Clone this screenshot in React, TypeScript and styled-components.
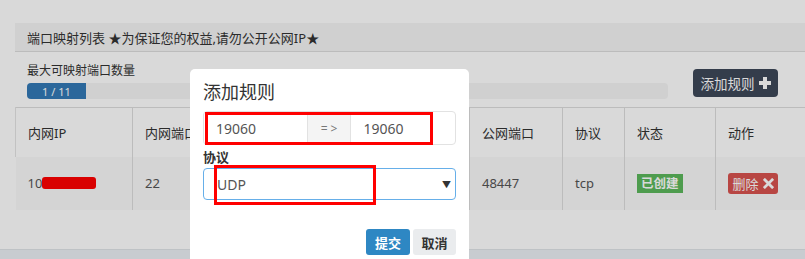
import React from "react";
import styled, { createGlobalStyle } from "styled-components";

const Global = createGlobalStyle`
  html, body { margin: 0; padding: 0; }
  body {
    width: 805px; height: 259px; overflow: hidden; background: #ffffff;
    font-family: "Noto Sans", "Noto Sans CJK SC", sans-serif; color: #333;
  }
  #root { position: relative; width: 805px; height: 259px; }
`;

const Page = styled.div`
  position: relative;
  width: 805px;
  height: 259px;
  overflow: hidden;
  display: flex;
  flex-direction: column;
`;

const Content = styled.div`
  padding: 23px 0 0 15px;
`;

const Panel = styled.div`
  width: 820px;
  background: #fff;
  display: flex;
  flex-direction: column;
`;

const Heading = styled.div`
  height: 29px;
  box-sizing: border-box;
  background: #f5f5f5;
  border-bottom: 1px solid #ddd;
  padding-left: 12px;
  display: flex;
  align-items: center;
  font-size: 13px;
  color: #333;
`;

const TopSection = styled.div`
  display: flex;
  align-items: flex-end;
  padding: 10px 12px 8px;
`;

const QuotaBlock = styled.div`
  width: 641px;
  display: flex;
  flex-direction: column;
  gap: 3px;
`;

const QuotaLabel = styled.div`
  font-size: 12px;
  line-height: 18px;
  color: #333;
`;

const Progress = styled.div`
  height: 16px;
  background: #f5f5f5;
  border-radius: 4px;
  overflow: hidden;
  display: flex;
`;

const ProgressFill = styled.div`
  background: #337ab7;
  color: #fff;
  font-size: 11px;
  display: flex;
  align-items: center;
  justify-content: center;
`;

const AddButton = styled.button`
  margin-left: 25px;
  margin-bottom: 2px;
  width: 85px;
  height: 28px;
  border: none;
  border-radius: 4px;
  background: #3e4859;
  color: #fff;
  font-family: inherit;
  font-size: 13.5px;
  display: flex;
  align-items: center;
  justify-content: center;
  gap: 4px;
  padding: 0;
`;

const Table = styled.table`
  border-collapse: collapse;
  table-layout: fixed;
  width: 805px;
  border-top: 1px solid #ddd;
  font-size: 13px;
`;

const Th = styled.th<{ $w: number; $first?: boolean }>`
  width: ${(p) => p.$w}px;
  height: 49px;
  padding: 0 12px;
  text-align: left;
  font-weight: normal;
  color: #333;
  border-left: 1px solid ${(p) => (p.$first ? "#e4e4e4" : "#ddd")};
  box-sizing: border-box;
`;

const Td = styled.td<{ $first?: boolean }>`
  height: 53px;
  padding: 0 12px;
  background: #f9f9f9;
  color: #555;
  border-left: ${(p) => (p.$first ? "none" : "1px solid #ddd")};
`;

const Redact = styled.span`
  display: inline-block;
  width: 54px;
  height: 12px;
  margin-left: -4px;
  background: #ff0000;
  border-radius: 3px;
  vertical-align: -1px;
`;

const StatusLabel = styled.span`
  display: inline-block;
  background: #5cb85c;
  color: #fff;
  font-size: 12.5px;
  font-weight: bold;
  line-height: 19px;
  padding: 0 4px;
`;

const DeleteButton = styled.button`
  border: none;
  border-radius: 3px;
  background: #d9534f;
  color: #fff;
  font-family: inherit;
  font-size: 13px;
  height: 21px;
  width: 50px;
  padding: 0;
  display: inline-flex;
  align-items: center;
  justify-content: center;
  gap: 4px;
`;

const Spacer = styled.div`
  height: 39px;
  background: #fff;
`;

const Footer = styled.div`
  flex: 1;
  background: #ecf0f5;
  border-top: 1px solid #e0e4e8;
`;

const Overlay = styled.div`
  position: absolute;
  inset: 0;
  background: rgba(0, 0, 0, 0.15);
`;

const Modal = styled.div`
  position: absolute;
  left: 190px;
  top: 69px;
  width: 279px;
  height: 210px;
  background: #fff;
  border-radius: 5px;
  box-sizing: border-box;
  padding: 10px 13px 0;
  display: flex;
  flex-direction: column;
`;

const ModalTitle = styled.div`
  font-size: 18px;
  line-height: 26px;
  color: #333;
  margin-bottom: 6px;
`;

const InputGroup = styled.div`
  display: flex;
  height: 34px;
  border: 1px solid #e2e2e2;
  border-radius: 4px;
  box-sizing: border-box;
  overflow: hidden;
`;

const Field = styled.div<{ $w: number }>`
  width: ${(p) => p.$w}px;
  display: flex;
  align-items: center;
  padding-left: 12px;
  box-sizing: border-box;
  font-size: 14px;
  color: #555;
`;

const Addon = styled.div`
  width: 45px;
  background: #f4f4f4;
  border-left: 1px solid #e2e2e2;
  border-right: 1px solid #e2e2e2;
  display: flex;
  align-items: center;
  justify-content: center;
  font-size: 12px;
  color: #777;
  letter-spacing: 3px;
  padding-left: 3px;
  box-sizing: border-box;
`;

const FieldLabel = styled.div`
  font-size: 13px;
  font-weight: bold;
  color: #333;
  line-height: 22px;
  margin-top: 1px;
`;

const Select = styled.div`
  height: 32px;
  border: 1px solid #66afe9;
  border-radius: 4px;
  box-sizing: border-box;
  display: flex;
  align-items: center;
  justify-content: space-between;
  padding: 0 4px 0 13px;
  font-size: 14px;
  color: #555;
`;

const Caret = styled.span`
  font-size: 9px;
  color: #333;
`;

const Actions = styled.div`
  margin-top: 29px;
  display: flex;
  justify-content: flex-end;
  gap: 3px;
`;

const ModalButton = styled.button<{ $primary?: boolean }>`
  height: 26px;
  width: ${(p) => (p.$primary ? 44 : 43)}px;
  padding: 0;
  border: none;
  border-radius: 3px;
  background: ${(p) => (p.$primary ? "#2e87c3" : "#eaecee")};
  color: ${(p) => (p.$primary ? "#fff" : "#333")};
  font-family: inherit;
  font-size: 13px;
  font-weight: bold;
`;

const Annotation = styled.div<{ $l: number; $t: number; $w: number; $h: number }>`
  position: absolute;
  left: ${(p) => p.$l}px;
  top: ${(p) => p.$t}px;
  width: ${(p) => p.$w}px;
  height: ${(p) => p.$h}px;
  border: 3px solid #ff0000;
  box-sizing: border-box;
  pointer-events: none;
`;

const PlusIcon = () => (
  <svg width="12" height="12" viewBox="0 0 12 12">
    <rect x="4" y="0" width="4" height="12" fill="#fff" />
    <rect x="0" y="4" width="12" height="4" fill="#fff" />
  </svg>
);

const CrossIcon = () => (
  <svg width="11" height="11" viewBox="0 0 12 12">
    <path d="M2 2 L10 10 M10 2 L2 10" stroke="#fff" strokeWidth="3" strokeLinecap="square" />
  </svg>
);

export default function App() {
  return (
    <>
      <Global />
      <Page>
        <Content>
          <Panel>
            <Heading>端口映射列表 ★为保证您的权益,请勿公开公网IP★</Heading>
            <TopSection>
              <QuotaBlock>
                <QuotaLabel>最大可映射端口数量</QuotaLabel>
                <Progress>
                  <ProgressFill style={{ width: `${(1 / 11) * 100 + 0.1}%` }}>1 / 11</ProgressFill>
                </Progress>
              </QuotaBlock>
              <AddButton>
                添加规则 <PlusIcon />
              </AddButton>
            </TopSection>
            <Table>
              <thead>
                <tr>
                  <Th $w={117} $first>内网IP</Th>
                  <Th $w={168}>内网端口</Th>
                  <Th $w={169}></Th>
                  <Th $w={93}>公网端口</Th>
                  <Th $w={62}>协议</Th>
                  <Th $w={91}>状态</Th>
                  <Th $w={105}>动作</Th>
                </tr>
              </thead>
              <tbody>
                <tr>
                  <Td $first>
                    10.<Redact />
                  </Td>
                  <Td>22</Td>
                  <Td></Td>
                  <Td>48447</Td>
                  <Td>tcp</Td>
                  <Td>
                    <StatusLabel>已创建</StatusLabel>
                  </Td>
                  <Td>
                    <DeleteButton>
                      删除 <CrossIcon />
                    </DeleteButton>
                  </Td>
                </tr>
              </tbody>
            </Table>
            <Spacer />
          </Panel>
        </Content>
        <Footer />
        <Overlay />
        <Modal>
          <ModalTitle>添加规则</ModalTitle>
          <InputGroup>
            <Field $w={103}>19060</Field>
            <Addon>=&gt;</Addon>
            <Field $w={104}>19060</Field>
          </InputGroup>
          <FieldLabel>协议</FieldLabel>
          <Select>
            <span>UDP</span>
            <Caret>▼</Caret>
          </Select>
          <Actions>
            <ModalButton $primary>提交</ModalButton>
            <ModalButton>取消</ModalButton>
          </Actions>
          <Annotation $l={15} $t={43} $w={228} $h={33} />
          <Annotation $l={24} $t={96} $w={162} $h={40} />
        </Modal>
      </Page>
    </>
  );
}
